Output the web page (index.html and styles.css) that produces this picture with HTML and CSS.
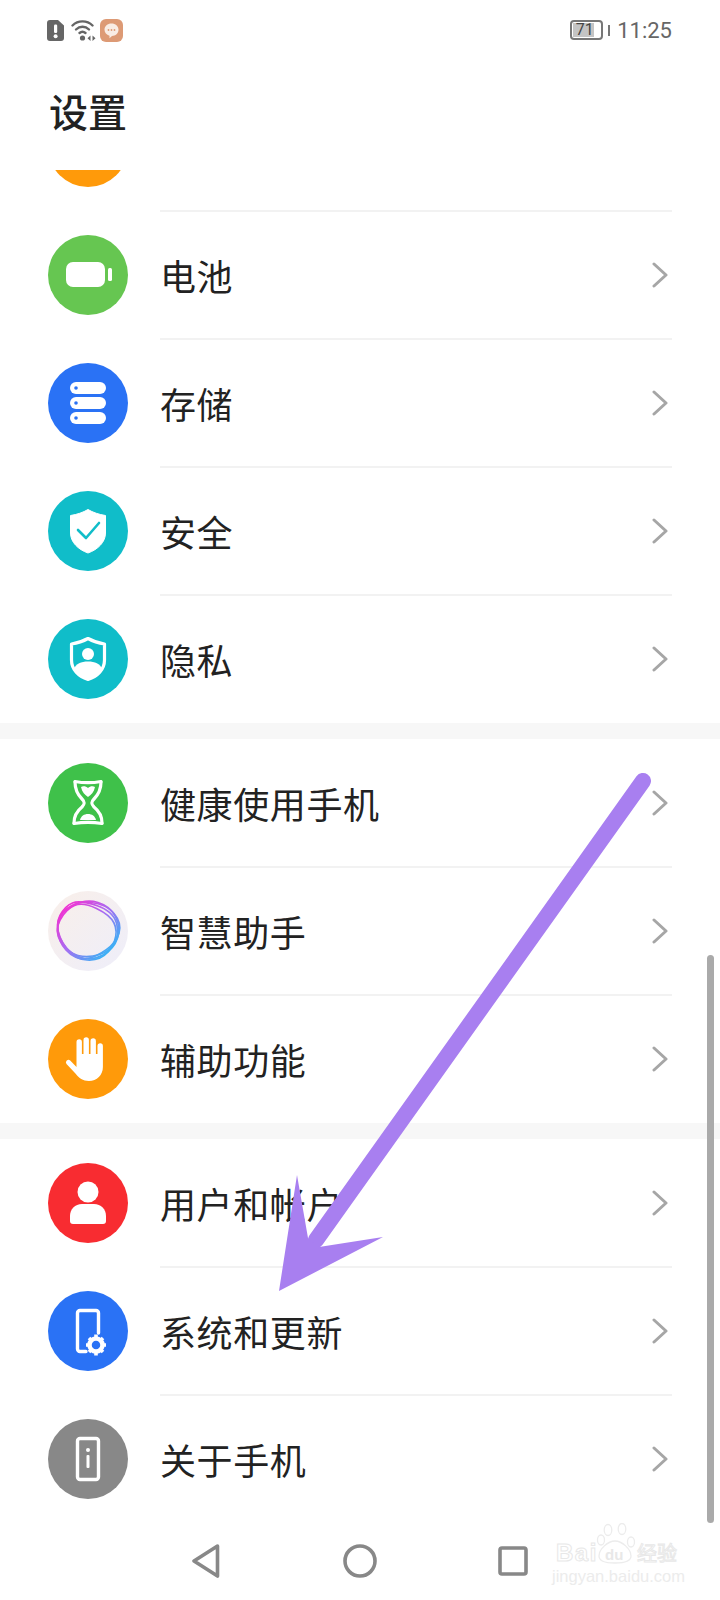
FILE: index.html
```html
<!DOCTYPE html>
<html lang="zh-CN">
<head>
<meta charset="utf-8">
<title>设置</title>
<link rel="stylesheet" href="styles.css">
</head>
<body>
<div class="phone">
  <div class="status">
    <div class="status-left">
      <svg class="st-alert" viewBox="0 0 17 21"><path d="M3 0h8l6 5.500V18a3 3 0 0 1-3 3H3a3 3 0 0 1-3-3V3a3 3 0 0 1 3-3z" fill="#666"/><rect x="7" y="4.500" width="3.200" height="8.500" rx="1.200" fill="#fff"/><circle cx="8.600" cy="16.300" r="2" fill="#fff"/></svg>
      <svg class="st-wifi" viewBox="0 0 25 23" fill="none" stroke="#666" stroke-width="2.400" stroke-linecap="round"><path d="M1.500 6.500C7 1 16 1 21.500 6.500"/><path d="M5 10.500c3.800-3.600 9.200-3.600 13 0"/><path d="M8.500 14c2-1.700 4-1.700 6 0"/><circle cx="11.500" cy="19" r="2.600" fill="#666" stroke="none"/><path d="M19.500 16.500l-3 2.700 3 2.700zM21.500 16.500l3 2.700-3 2.700z" fill="#666" stroke="none"/></svg>
      <svg class="st-msg" viewBox="0 0 23 23"><rect width="23" height="23" rx="6" fill="#dd9a75"/><path d="M11.500 4.500c4 0 7 2.700 7 6.300s-3 6.200-6.500 6.200l-2.500 2.200v-2.500c-3-.8-5-3.100-5-5.900C4.500 7.200 7.500 4.500 11.500 4.500z" fill="#f9ece4"/><circle cx="8.500" cy="11" r=".9" fill="#dd9a75"/><circle cx="11.500" cy="11" r=".9" fill="#dd9a75"/><circle cx="14.500" cy="11" r=".9" fill="#dd9a75"/></svg>
    </div>
    <div class="status-right">
      <div class="battery"><span class="battery-level">71</span></div>
      <span class="battery-nub"></span>
      <span class="clock">11:25</span>
    </div>
  </div>

  <h1 class="title">设置</h1>

  <div class="list">
    <section class="group group-first">
      <div class="row">
        <svg class="icon" viewBox="0 0 80 80"><circle cx="40" cy="40" r="40" fill="#ff9a0a"/></svg>
        <div class="row-body"></div>
      </div>
      <div class="row">
        <svg class="icon" viewBox="0 0 80 80"><circle cx="40" cy="40" r="40" fill="#66c651"/><rect x="18" y="27" width="39" height="25" rx="7" fill="#fff"/><rect x="60" y="33" width="4" height="13" rx="1.500" fill="#fff"/></svg>
        <div class="row-body"><span class="label">电池</span><svg class="chev" viewBox="0 0 16 26"><path d="M2 2l12 11L2 24"/></svg></div>
      </div>
      <div class="row">
        <svg class="icon" viewBox="0 0 80 80"><circle cx="40" cy="40" r="40" fill="#2a72f5"/><rect x="22" y="19" width="36" height="12" rx="6" fill="#fff"/><rect x="22" y="34" width="36" height="12" rx="6" fill="#fff"/><rect x="22" y="49" width="36" height="12" rx="6" fill="#fff"/><circle cx="28" cy="25" r="1.800" fill="#2a72f5"/><circle cx="28" cy="40" r="1.800" fill="#2a72f5"/><circle cx="28" cy="55" r="1.800" fill="#2a72f5"/></svg>
        <div class="row-body"><span class="label">存储</span><svg class="chev" viewBox="0 0 16 26"><path d="M2 2l12 11L2 24"/></svg></div>
      </div>
      <div class="row">
        <svg class="icon" viewBox="0 0 80 80"><circle cx="40" cy="40" r="40" fill="#10bdc9"/><path d="M40 18.500c5 3 11 5 17.500 6V42c0 9-7.500 16.500-17.500 20-10-3.500-17.500-11-17.500-20V24.500c6.500-1 12.500-3 17.500-6z" fill="#fff" stroke="#fff" stroke-width="1" stroke-linejoin="round"/><path d="M30 39l8 8 13-15" fill="none" stroke="#10bdc9" stroke-width="2.600" stroke-linecap="round" stroke-linejoin="round"/></svg>
        <div class="row-body"><span class="label">安全</span><svg class="chev" viewBox="0 0 16 26"><path d="M2 2l12 11L2 24"/></svg></div>
      </div>
      <div class="row">
        <svg class="icon" viewBox="0 0 80 80"><circle cx="40" cy="40" r="40" fill="#10bdc9"/><path d="M40 19.500c5 2.800 10.500 4.600 16.500 5.500V41c0 9.500-7 16.500-16.500 19.500C30.500 57.500 23.500 50.500 23.500 41V25c6-.9 11.500-2.700 16.500-5.500z" fill="none" stroke="#fff" stroke-width="3.200" stroke-linejoin="round"/><circle cx="40" cy="35" r="6" fill="#fff"/><path d="M26 50c2-5.500 7-7.500 14-7.500S52 44.500 54 50c-3 5-8 8.500-14 11-6-2.500-11-6-14-11z" fill="#fff"/></svg>
        <div class="row-body row-last"><span class="label">隐私</span><svg class="chev" viewBox="0 0 16 26"><path d="M2 2l12 11L2 24"/></svg></div>
      </div>
    </section>

    <section class="group">
      <div class="row">
        <svg class="icon" viewBox="0 0 80 80"><circle cx="40" cy="40" r="40" fill="#3fc14a"/><g fill="none" stroke="#fff" stroke-width="3.200" stroke-linecap="round" stroke-linejoin="round"><path d="M27 18.500c8 1.500 18 1.500 26 0M26 60.500c9-1.500 19-1.500 28 0"/><path d="M27 19c0 8 3 13 7 17 3 3 3 5 0 8-5 4-8 9-8 16M53 19c0 8-3 13-7 17-3 3-3 5 0 8 5 4 8 9 8 16"/></g><path d="M33 24c2-1.500 5-1 7 1 2-2 5-2.500 7-1-1 5-4 8-7 10-3-2-6-5-7-10z" fill="#fff"/><path d="M32 57c1-4 4-6 8-6s7 2 8 6z" fill="#fff"/></svg>
        <div class="row-body"><span class="label">健康使用手机</span><svg class="chev" viewBox="0 0 16 26"><path d="M2 2l12 11L2 24"/></svg></div>
      </div>
      <div class="row">
        <svg class="icon" viewBox="0 0 80 80">
          <defs>
            <linearGradient id="wBg" x1="0" y1="0" x2="1" y2="1"><stop offset="0" stop-color="#f9efe9"/><stop offset="1" stop-color="#eeeefa"/></linearGradient>
            <linearGradient id="wRing" gradientUnits="userSpaceOnUse" x1="16" y1="14" x2="62" y2="62"><stop offset="0" stop-color="#f52fd0"/><stop offset="0.500" stop-color="#a86cf2"/><stop offset="1" stop-color="#35b4f5"/></linearGradient>
          </defs>
          <circle cx="40" cy="40" r="40" fill="url(#wBg)"/>
          <g fill="none" stroke="url(#wRing)" stroke-width="1.700">
            <path d="M48.500 14.500Q65 20 68.500 32Q72 44 66 51.500Q60 59 47.500 65Q35 71 26 64.500Q17 58 12 46Q7 34 12 24.500Q17 15 24.500 12Q32 9 48.500 14.500z"/>
            <path d="M50 11.500Q62 15 67.500 25.500Q73 36 69.500 47Q66 58 55 64Q44 70 33 66.500Q22 63 15 52.500Q8 42 10.500 31Q13 20 25.500 14Q38 8 50 11.500z"/>
            <path d="M43 11.500Q58 13 66 22.500Q74 32 71 42Q68 52 60 61Q52 70 39 69Q26 68 18 59Q10 50 9.500 38Q9 26 18.500 18Q28 10 43 11.500z"/>
            <path d="M48.500 17.500Q62 24 66 32Q70 40 66.500 50Q63 60 51.500 63.500Q40 67 30 64.500Q20 62 13 51Q6 40 12 29Q18 18 26.500 14.500Q35 11 48.500 17.500z"/>
          </g>
        </svg>
        <div class="row-body"><span class="label">智慧助手</span><svg class="chev" viewBox="0 0 16 26"><path d="M2 2l12 11L2 24"/></svg></div>
      </div>
      <div class="row">
        <svg class="icon" viewBox="0 0 80 80"><circle cx="40" cy="40" r="40" fill="#ff9a0a"/><path d="M28.500 23a2.700 2.700 0 0 1 5.400 0v12h1.600V21a2.700 2.700 0 0 1 5.400 0v14h1.600V22a2.700 2.700 0 0 1 5.400 0v13h1.600V27a2.700 2.700 0 0 1 5.400 0v21c0 8-6 14-14 14-6 0-10-3-13-7L18.500 45a2.600 2.600 0 0 1 3.700-3.600l6.300 6.600z" fill="#fff"/></svg>
        <div class="row-body row-last"><span class="label">辅助功能</span><svg class="chev" viewBox="0 0 16 26"><path d="M2 2l12 11L2 24"/></svg></div>
      </div>
    </section>

    <section class="group">
      <div class="row">
        <svg class="icon" viewBox="0 0 80 80"><circle cx="40" cy="40" r="40" fill="#f82c31"/><circle cx="40" cy="29" r="10.500" fill="#fff"/><path d="M34 41h12c7 0 12 5 12 12v5a3 3 0 0 1-3 3H25a3 3 0 0 1-3-3v-5c0-7 5-12 12-12z" fill="#fff"/></svg>
        <div class="row-body"><span class="label">用户和帐户</span><svg class="chev" viewBox="0 0 16 26"><path d="M2 2l12 11L2 24"/></svg></div>
      </div>
      <div class="row">
        <svg class="icon" viewBox="0 0 80 80"><circle cx="40" cy="40" r="40" fill="#2a72f5"/><path d="M38 60.500h-6a2.500 2.500 0 0 1-2.500-2.500V22a2.500 2.500 0 0 1 2.500-2.500h16a2.500 2.500 0 0 1 2.500 2.500v20" fill="none" stroke="#fff" stroke-width="3.400" stroke-linecap="round"/><circle cx="48" cy="54" r="6.500" fill="none" stroke="#fff" stroke-width="4.500"/><g stroke="#fff" stroke-width="3.600"><path d="M48 43.500v3M48 61.500v3M38 54h3M55 54h3M41 47l2 2M53 59l2 2M41 61l2-2M53 49l2-2"/></g></svg>
        <div class="row-body"><span class="label">系统和更新</span><svg class="chev" viewBox="0 0 16 26"><path d="M2 2l12 11L2 24"/></svg></div>
      </div>
      <div class="row">
        <svg class="icon" viewBox="0 0 80 80"><circle cx="40" cy="40" r="40" fill="#888"/><rect x="29.500" y="19.500" width="21" height="41" rx="2.500" fill="none" stroke="#fff" stroke-width="3.400"/><circle cx="40" cy="31" r="2" fill="#fff"/><rect x="38.500" y="36" width="3" height="13" rx="1" fill="#fff"/></svg>
        <div class="row-body row-last"><span class="label">关于手机</span><svg class="chev" viewBox="0 0 16 26"><path d="M2 2l12 11L2 24"/></svg></div>
      </div>
    </section>
  </div>

  <nav class="nav">
    <svg class="nav-back" viewBox="0 0 28 34"><path d="M25.500 2L2 17l23.500 15z" /></svg>
    <svg class="nav-home" viewBox="0 0 34 34"><circle cx="17" cy="17" r="15"/></svg>
    <svg class="nav-recent" viewBox="0 0 30 30"><rect x="2" y="2" width="26" height="26" rx="2"/></svg>
  </nav>

  <div class="scrollbar"></div>

  <svg class="arrow" viewBox="0 0 720 1600">
    <path class="arrow-shaft" d="M643 781L316 1240"/>
    <path class="arrow-head" d="M297 1175L308 1238L319 1247L383 1237L279 1291z"/>
  </svg>

  <div class="mark">
    <svg class="mark-paw" viewBox="0 0 44 42" fill="none" stroke="#ececec" stroke-width="1.300"><ellipse cx="5" cy="17" rx="3.500" ry="5"/><ellipse cx="12" cy="7" rx="3.800" ry="5.500"/><ellipse cx="26" cy="6" rx="3.800" ry="5.500"/><ellipse cx="35" cy="19" rx="3.500" ry="5"/><path d="M3 33c0-7 9-15 16-15s16 8 16 15c0 6-8 7-16 7S3 39 3 33z"/></svg>
    <div class="mark-line">
      <span class="mark-bai">Bai</span>
      <span class="mark-du">du</span>
      <span class="mark-jy">经验</span>
    </div>
    <div class="mark-url">jingyan.baidu.com</div>
  </div>
</div>
</body>
</html>
```
FILE: styles.css
```css
* { box-sizing: border-box; }
html, body { margin: 0; padding: 0; background: #fff; }
.phone {
  position: relative;
  width: 720px;
  height: 1600px;
  overflow: hidden;
  display: flex;
  flex-direction: column;
  background: #fff;
  font-family: "Noto Sans CJK SC", "Noto Sans", sans-serif;
  color: #222;
}
.status {
  height: 60px;
  flex: none;
  display: flex;
  justify-content: space-between;
  align-items: center;
  padding: 0 48px 0 47px;
}
.status-left { display: flex; align-items: center; }
.st-alert { width: 17px; height: 21px; }
.st-wifi { width: 25px; height: 23px; margin-left: 7px; }
.st-msg { width: 23px; height: 23px; margin-left: 4px; }
.status-right { display: flex; align-items: center; }
.battery {
  width: 33px;
  height: 20px;
  border: 2.5px solid #777;
  border-radius: 4px;
  padding: 1px 7px 1px 1px;
  display: flex;
}
.battery-level {
  flex: 1;
  background: #c4c4c4;
  color: #444;
  font: 16px/13px Roboto, sans-serif;
  text-align: right;
  overflow: visible;
}
.battery-nub { width: 2.5px; height: 11px; background: #777; margin-left: 5px; }
.clock {
  margin-left: 7px;
  font: 400 22px/28px Roboto, sans-serif;
  color: #666;
  position: relative;
  top: 1px;
}
.title {
  height: 110px;
  flex: none;
  margin: 0;
  padding: 22px 0 0 49px;
  font-size: 39px;
  line-height: 56px;
  font-weight: 500;
  color: #222;
}
.list {
  height: 1353px;
  flex: none;
  overflow: hidden;
  display: flex;
  flex-direction: column;
  gap: 16px;
  background: #f7f7f7;
}
.group { background: #fff; display: flex; flex-direction: column; flex: none; }
.group-first { margin-top: -87.4px; }
.row {
  height: 128px;
  flex: none;
  display: flex;
  align-items: center;
  gap: 32px;
  padding-left: 48px;
}
.icon { width: 80px; height: 80px; flex: none; }
.row-body {
  flex: 1;
  align-self: stretch;
  margin: 0 48px -1px 0;
  padding: 2px 4px 0 0;
  display: flex;
  align-items: center;
  justify-content: space-between;
  border-bottom: 2px solid #f2f2f2;
}
.row-last { border-bottom-color: transparent; }
.label { font-size: 36px; line-height: 50px; letter-spacing: 0.6px; color: #222; }
.chev { width: 16px; height: 26px; fill: none; stroke: #a6a6a6; stroke-width: 3; stroke-linecap: round; stroke-linejoin: round; }
.nav {
  flex: 1;
  display: flex;
  align-items: center;
  padding: 0 192px 2px 192px;
}
.nav svg { fill: none; stroke: #888; stroke-width: 3.6; stroke-linejoin: round; flex: none; }
.nav-back { width: 28px; height: 34px; }
.nav-home { width: 34px; height: 34px; margin-left: 123px; }
.nav-recent { width: 30px; height: 30px; margin-left: 121px; }
.scrollbar {
  position: absolute;
  left: 707px;
  top: 955px;
  width: 7px;
  height: 568px;
  border-radius: 4px;
  background: #aaa;
}
.arrow { position: absolute; left: 0; top: 0; width: 720px; height: 1600px; pointer-events: none; }
.arrow-shaft { fill: none; stroke: #a87ff0; stroke-width: 16; stroke-linecap: round; }
.arrow-head { fill: #a87ff0; }
.mark {
  position: absolute;
  left: 552px;
  top: 1523px;
  width: 130px;
  height: 62px;
  color: #ececec;
  font-family: "Liberation Sans", sans-serif;
}
.mark-paw { position: absolute; left: 44px; top: 0; width: 44px; height: 42px; }
.mark-line {
  position: absolute;
  left: 4px;
  top: 15px;
  display: flex;
  align-items: center;
  height: 30px;
}
.mark-bai { font-size: 24px; line-height: 28px; font-weight: 700; letter-spacing: 1.5px; color: #fff; -webkit-text-stroke: 1px #e8e8e8; width: 49px; }
.mark-du { font-size: 15px; line-height: 18px; font-weight: 700; color: #e8e8e8; width: 32px; padding-top: 4px; }
.mark-jy { font-size: 20px; line-height: 26px; font-family: "Noto Sans CJK SC", sans-serif; color: #fff; -webkit-text-stroke: 1px #e8e8e8; }
.mark-url { position: absolute; left: 0; top: 45px; font-size: 16.500px; line-height: 17px; white-space: nowrap; color: #ececec; }
```
